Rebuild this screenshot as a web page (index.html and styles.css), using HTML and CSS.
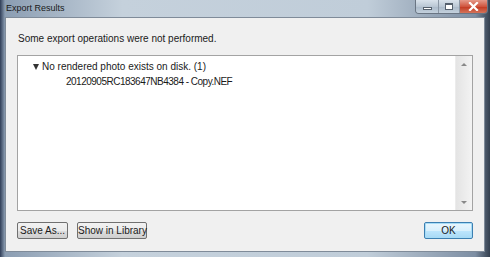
FILE: index.html
```html
<!DOCTYPE html>
<html lang="en">
<head>
    <meta charset="UTF-8">
    <title>Export Results</title>
    <link rel="stylesheet" href="styles.css">
</head>
<body>
    <div class="window">
        <div class="titlebar">
            <span class="title">Export Results</span>
            <div class="caption-buttons">
                <div class="cap-btn cap-min"><span class="min-glyph"></span></div>
                <div class="cap-btn cap-max"><span class="max-glyph"></span></div>
                <div class="cap-btn cap-close">
                    <svg width="11" height="9" viewBox="0 0 11 9">
                        <path d="M2 1 L9 8 M9 1 L2 8" stroke="#fff" stroke-width="2.2" stroke-linecap="square"/>
                    </svg>
                </div>
            </div>
        </div>
        <div class="client">
            <p class="message">Some export operations were not performed.</p>
            <div class="listbox">
                <div class="tree">
                    <div class="tree-node">
                        <span class="twisty"></span>
                        <span>No rendered photo exists on disk. (1)</span>
                    </div>
                    <div class="tree-child">20120905RC183647NB4384 - Copy.NEF</div>
                </div>
                <div class="scrollbar">
                    <span class="arrow-up"></span>
                    <span class="arrow-down"></span>
                </div>
            </div>
            <div class="actions">
                <button class="btn btn-save">Save As...</button>
                <button class="btn btn-show">Show in Library</button>
                <button class="btn btn-default">OK</button>
            </div>
        </div>
    </div>
</body>
</html>
```

FILE: styles.css
```css
body {
    margin: 0;
    padding: 0;
    font-family: "Liberation Sans", Arial, sans-serif;
    font-size: 10px;
    color: #1a1a1a;
}
.window {
    width: 490px;
    height: 257px;
    box-sizing: border-box;
    display: flex;
    flex-direction: column;
    padding: 0 5px 5px 5px;
    background: linear-gradient(90deg, #2f3d57 0, #8b9db2 5px, #c5d1dc 25%, #c0cdd9 75%, #7d8ea3 97%, #34404f 100%);
}
.titlebar {
    height: 17px;
    display: flex;
    justify-content: space-between;
    align-items: flex-start;
}
.title {
    margin-top: 3px;
    margin-left: 1px;
    font-size: 9px;
    color: #1a1a1a;
}
.caption-buttons {
    display: flex;
    margin-right: -3px;
    border: 1px solid #6a7583;
    border-top: none;
    border-radius: 0 0 4px 4px;
    overflow: hidden;
    height: 13px;
}
.cap-btn {
    display: flex;
    align-items: center;
    justify-content: center;
    background: linear-gradient(#d9e2eb, #bac7d4 50%, #a9b8c8 51%, #c4d1dd);
    border-left: 1px solid #8a96a4;
}
.cap-min {
    width: 22px;
    border-left: none;
}
.cap-max {
    width: 20px;
}
.cap-close {
    width: 27px;
    background: linear-gradient(#e59a8a, #d0553f 50%, #c2371f 51%, #d4735a);
}
.min-glyph {
    width: 7px;
    height: 1px;
    margin-top: 4px;
    background: #fff;
    border: 1px solid #55606d;
}
.max-glyph {
    width: 6px;
    height: 4px;
    border: 1px solid #55606d;
    border-top-width: 2px;
    background: #fff;
}
.client {
    flex: 1;
    background: #f0f0f0;
    border: 1px solid #7f8b99;
    display: flex;
    flex-direction: column;
    padding: 0 11px 12px 11px;
}
.message {
    margin: 14px 0 10px 1px;
    line-height: 13px;
}
.listbox {
    flex: 1;
    display: flex;
    background: #fff;
    border: 1px solid #a3a3a3;
}
.tree {
    flex: 1;
    padding: 3px 0 0 15px;
}
.tree-node {
    display: flex;
    align-items: center;
    gap: 3px;
    height: 15px;
}
.twisty {
    width: 0;
    height: 0;
    border-left: 3px solid transparent;
    border-right: 3px solid transparent;
    border-top: 6px solid #333;
}
.tree-child {
    height: 15px;
    line-height: 15px;
    padding-left: 33px;
    letter-spacing: -0.5px;
}
.scrollbar {
    width: 16px;
    background: linear-gradient(90deg, #e4e4e4, #f3f3f3);
    border-left: 1px solid #ececec;
    display: flex;
    flex-direction: column;
    justify-content: space-between;
    align-items: center;
    padding: 7px 0 6px 0;
}
.arrow-up {
    width: 0;
    height: 0;
    border-left: 3px solid transparent;
    border-right: 3px solid transparent;
    border-bottom: 3px solid #888;
}
.arrow-down {
    width: 0;
    height: 0;
    border-left: 3px solid transparent;
    border-right: 3px solid transparent;
    border-top: 3px solid #888;
}
.actions {
    display: flex;
    gap: 9px;
    margin-top: 11px;
}
.btn {
    height: 17px;
    padding: 0;
    white-space: nowrap;
    font-family: "Liberation Sans", Arial, sans-serif;
    font-size: 10px;
    color: #1a1a1a;
    border: 1px solid #707070;
    border-radius: 2px;
    background: linear-gradient(#f2f2f2, #ebebeb 50%, #dddddd 51%, #cfcfcf);
}
.btn-save {
    width: 51px;
}
.btn-show {
    width: 70px;
}
.btn-default {
    margin-left: auto;
    width: 49px;
    border-color: #3c7fb1;
    box-shadow: inset 0 0 0 1px #a7dcf6;
    background: linear-gradient(#eaf6fd, #d9f0fc 50%, #bee6fd 51%, #a7d9f5);
}
```
